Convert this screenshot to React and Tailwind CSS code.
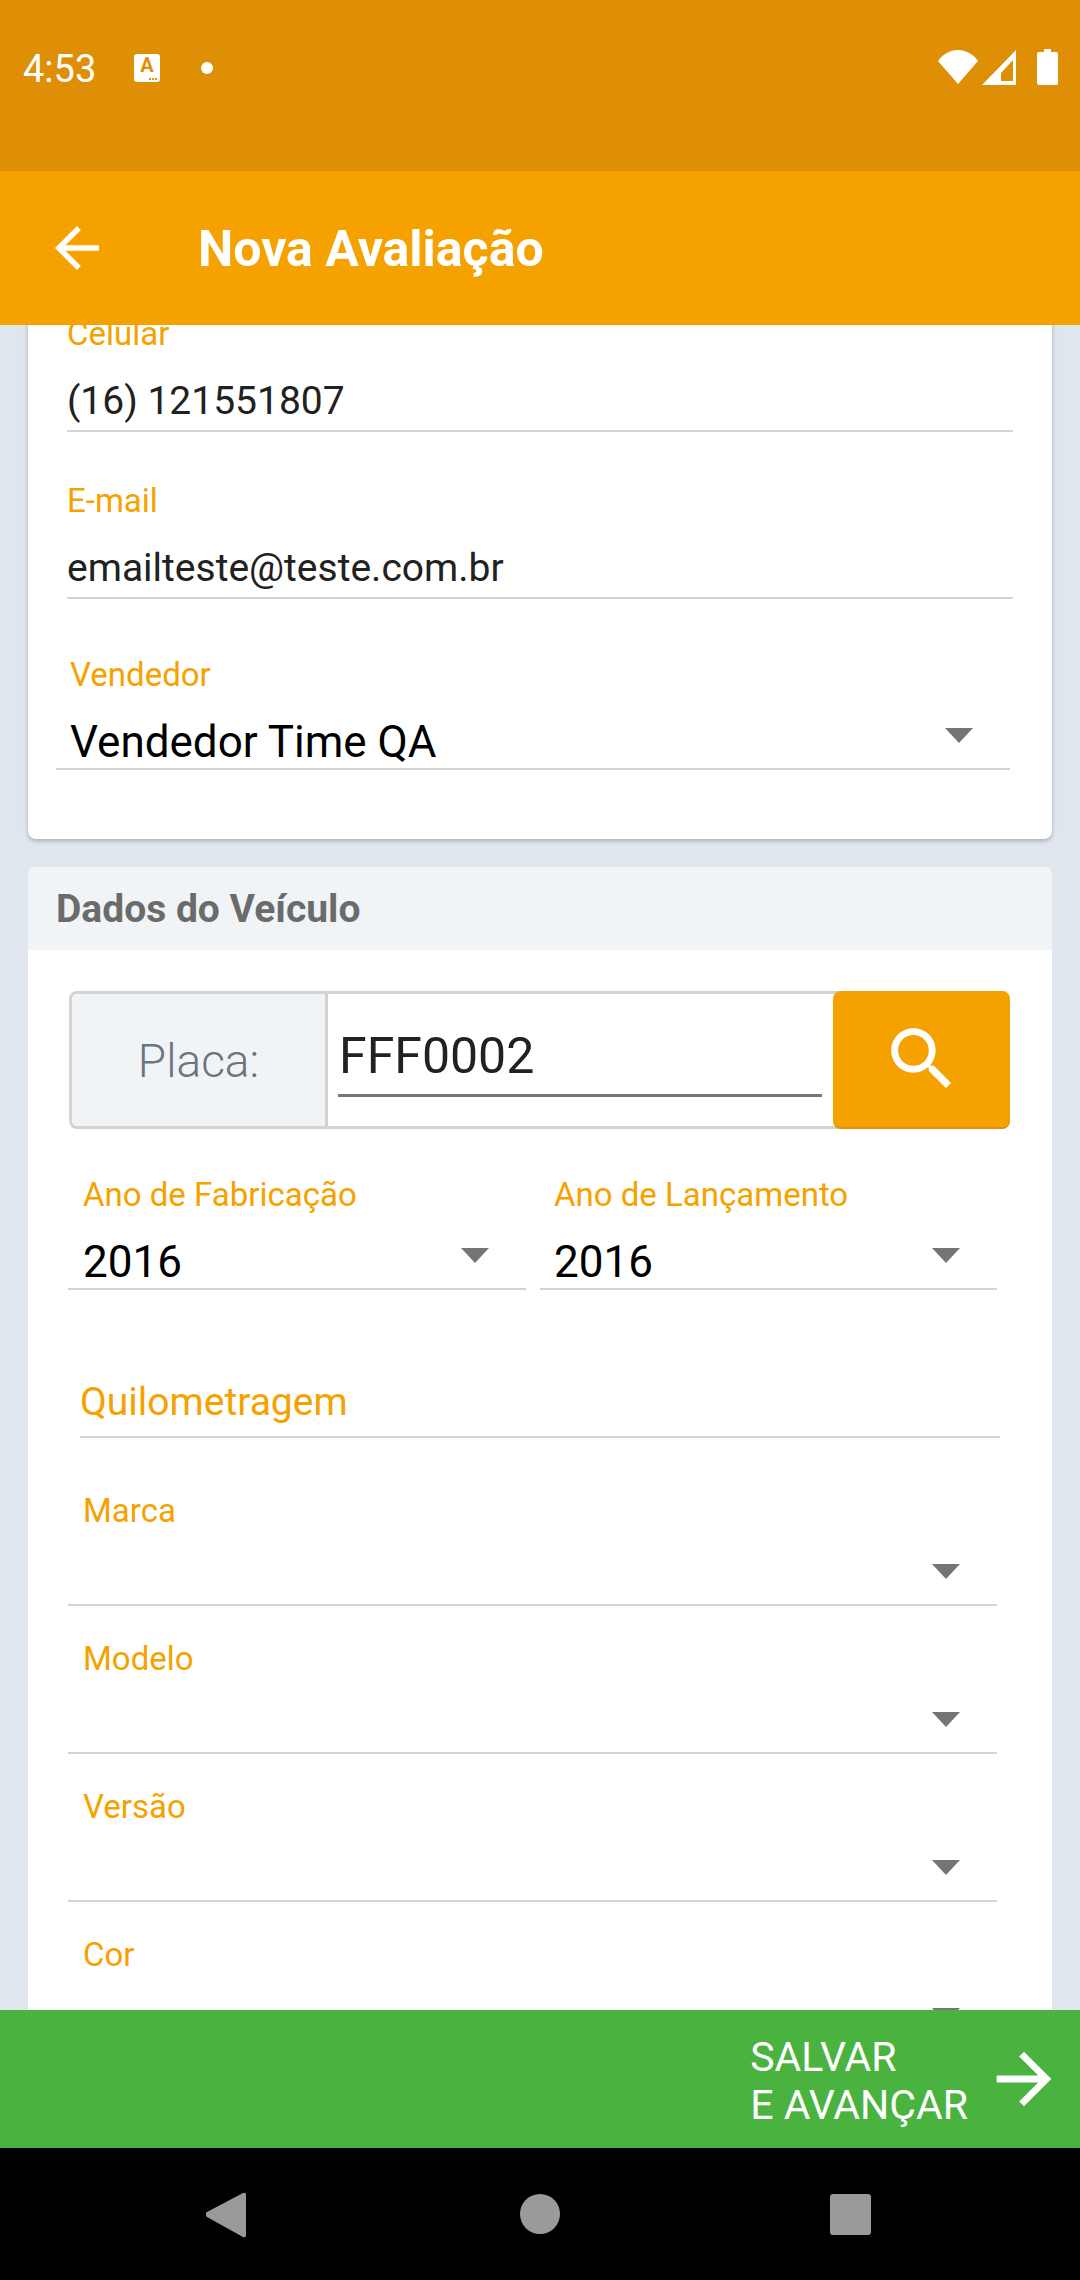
const Arrow = ({ className }) => (
    <svg viewBox="0 0 24 24" className={className} fill="currentColor">
        <path d="M12 4l-1.41 1.41L16.17 11H4v2h12.17l-5.58 5.59L12 20l8-8z" />
    </svg>
);

const BackArrow = ({ className }) => (
    <svg viewBox="0 0 24 24" className={className} fill="currentColor">
        <path d="M20 11H7.83l5.59-5.59L12 4l-8 8 8 8 1.41-1.41L7.83 13H20v-2z" />
    </svg>
);

const SearchIcon = ({ className }) => (
    <svg viewBox="0 0 24 24" className={className} fill="currentColor">
        <path d="M15.5 14h-.79l-.28-.27C15.41 12.59 16 11.11 16 9.5 16 5.91 13.09 3 9.5 3S3 5.91 3 9.5 5.91 16 9.5 16c1.61 0 3.09-.59 4.23-1.57l.27.28v.79l5 4.99L20.49 19l-4.99-5zm-6 0C7.01 14 5 11.99 5 9.5S7.01 5 9.5 5 14 7.01 14 9.5 11.99 14 9.5 14z" />
    </svg>
);

// gray triangle of the dropdowns
const Caret = () => (
    <svg viewBox="0 0 28 15" className="w-[28px] h-[15px] shrink-0 -mt-[12px]" fill="#757575">
        <path d="M0 0h28L14 15z" />
    </svg>
);

const TextField = ({ label, value, className }) => (
    <div className={className}>
        <div className="text-[33px] leading-[40px] text-[#f5a200]">{label}</div>
        <div className="text-[39px] leading-[50px] mt-[22px] text-[#212121]">{value}</div>
        <div className="h-[2px] bg-[#d3d3d3] mt-[4px]"></div>
    </div>
);

const SelectField = ({ label, value, className, narrow }) => (
    <div className={className}>
        <div className={narrow ? "text-[33px] leading-[40px] text-[#f5a200] pl-[14px]" : "text-[33px] leading-[40px] text-[#f5a200] pl-[15px]"}>{label}</div>
        <div className={narrow ? "flex items-center justify-between h-[53px] mt-[20px] pr-[37px] pl-[14px]" : "flex items-center justify-between h-[53px] mt-[20px] pr-[37px] pl-[15px]"}>
            <span className="text-[44px] leading-[50px] text-black">{value}</span>
            <Caret />
        </div>
        <div className="h-[2px] bg-[#d3d3d3]"></div>
    </div>
);

export default function App() {
    return (
        <div className="w-[1080px] h-[2280px] flex flex-col overflow-hidden bg-[#dfe6ed] font-['Roboto',sans-serif]">

            {/* STATUS BAR */}
            <div className="h-[171px] shrink-0 bg-[#de8f06] flex items-start justify-between pt-[49px] pl-[23px] pr-[22px] text-white">
                <div className="flex items-center h-[36px]">
                    <span className="text-[38px] leading-[36px] w-[111px] mt-[4px]">4:53</span>
                    <div className="relative w-[26px] h-[28px] mt-[1px] bg-white rounded-[3px] flex items-start justify-center">
                        <span className="text-[20px] leading-[22px] font-bold text-[#de8f06]">A</span>
                        <div className="absolute bottom-[2px] right-[3px] flex gap-[1px]">
                            <div className="w-[2px] h-[2px] bg-[#de8f06]"></div>
                            <div className="w-[2px] h-[2px] bg-[#de8f06]"></div>
                            <div className="w-[2px] h-[2px] bg-[#de8f06]"></div>
                        </div>
                    </div>
                    <div className="w-[12px] h-[12px] rounded-full bg-white ml-[41px] mt-[1px]"></div>
                </div>
                <div className="flex items-center gap-[4px]">
                    <svg viewBox="0 0 40 34" className="w-[40px] h-[34px]" fill="white">
                        <path d="M20 34L0 11C5 4 12 0 20 0s15 4 20 11z" />
                    </svg>
                    <svg viewBox="0 0 34 35" className="w-[34px] h-[35px]" fill="white">
                        <path fillRule="evenodd" d="M34 0v35H0zM31 10L19 23v8h12z" />
                    </svg>
                    <svg viewBox="0 0 21 36" className="w-[21px] h-[36px] ml-[17px]" fill="white">
                        <path d="M7 0h7v3h5a2 2 0 0 1 2 2v29a2 2 0 0 1-2 2H2a2 2 0 0 1-2-2V5a2 2 0 0 1 2-2h5z" />
                    </svg>
                </div>
            </div>

            {/* APP BAR */}
            <div className="h-[154px] shrink-0 bg-[#f5a200] flex items-center text-white relative z-10">
                <BackArrow className="w-[66px] h-[66px] ml-[44px]" />
                <h1 className="ml-[88px] mt-[2px] text-[50px] font-bold">Nova Avaliação</h1>
            </div>

            {/* CONTENT */}
            <div className="flex-1 min-h-0 overflow-hidden px-[28px]">
                <div className="-mt-[11px]">

                    <div className="bg-white rounded-b-[8px] shadow-[0_2px_4px_rgba(0,0,0,0.25)] h-[525px] flex flex-col">
                        <TextField label="Celular" value="(16) 121551807" className="mx-[39px]" />
                        <TextField label="E-mail" value="emailteste@teste.com.br" className="mx-[39px] mt-[49px]" />
                        <SelectField label="Vendedor" value="Vendedor Time QA" narrow className="ml-[28px] mr-[42px] mt-[56px]" />
                    </div>

                    <div className="bg-white rounded-t-[8px] mt-[28px]">
                        <div className="bg-[#f0f4f7] h-[83px] flex items-center pl-[28px] pt-[2px] rounded-t-[8px]">
                            <h2 className="text-[39px] font-bold text-[#6b6b6b]">Dados do Veículo</h2>
                        </div>

                        <div className="pt-[41px]">
                            {/* PLACA */}
                            <div className="ml-[41px] mr-[42px] h-[138px] flex rounded-[8px] border-[3px] border-[#d3d3d3] relative">
                                <div className="w-[256px] bg-[#f0f4f7] border-r-[3px] border-[#d3d3d3] rounded-l-[6px] flex items-center justify-center pt-[2px] text-[46px] text-[#6c757d] font-light">
                                    Placa:
                                </div>
                                <div className="w-[484px] ml-[10px] h-[103px] border-b-[3px] border-[#757575] flex items-end pb-[8px] pl-[1px]">
                                    <span className="text-[50px] leading-[60px] text-[#212121]">FFF0002</span>
                                </div>
                                <div className="absolute -top-[3px] -bottom-[3px] -right-[3px] w-[177px] bg-[#f5a200] border-b-[2px] border-[#e09200] rounded-[8px] flex items-center justify-center text-white">
                                    <SearchIcon className="w-[82px] h-[82px]" />
                                </div>
                            </div>

                            {/* ANOS */}
                            <div className="flex ml-[40px] mr-[55px] gap-[14px] mt-[46px]">
                                <SelectField label="Ano de Fabricação" value="2016" className="w-[458px]" />
                                <SelectField label="Ano de Lançamento" value="2016" narrow className="flex-1" />
                            </div>

                            <div className="mx-[52px] mt-[90px] pb-[12px] border-b-[2px] border-[#d3d3d3]">
                                <div className="text-[39px] leading-[44px] text-[#f5a200]">Quilometragem</div>
                            </div>

                            <div className="ml-[40px] mr-[55px] mt-[53px] flex flex-col gap-[33px]">
                                <SelectField label="Marca" value="" />
                                <SelectField label="Modelo" value="" />
                                <SelectField label="Versão" value="" />
                                <SelectField label="Cor" value="" />
                            </div>
                        </div>
                    </div>
                </div>
            </div>

            {/* SALVAR */}
            <div className="h-[138px] shrink-0 bg-[#4ab33f] flex items-center justify-end text-white relative z-10 pr-[15px]">
                <div className="text-[41px] leading-[48px] mr-[15px] pt-[4px]">
                    SALVAR<br />E AVANÇAR
                </div>
                <Arrow className="w-[82px] h-[82px]" />
            </div>

            {/* NAV BAR */}
            <div className="h-[132px] shrink-0 bg-black flex items-start pt-[44px]">
                <svg viewBox="0 0 40 46" className="w-[40px] h-[46px] ml-[206px]" fill="#9a9a9a">
                    <path d="M37 1L1 20a3 3 0 0 0 0 5l36 20a2 2 0 0 0 3-2V3a2 2 0 0 0-3-2z" />
                </svg>
                <div className="w-[40px] h-[40px] rounded-full bg-[#9a9a9a] ml-[274px] mt-[2px]"></div>
                <div className="w-[41px] h-[41px] rounded-[3px] bg-[#9a9a9a] ml-[270px] mt-[2px]"></div>
            </div>
        </div>
    );
}
